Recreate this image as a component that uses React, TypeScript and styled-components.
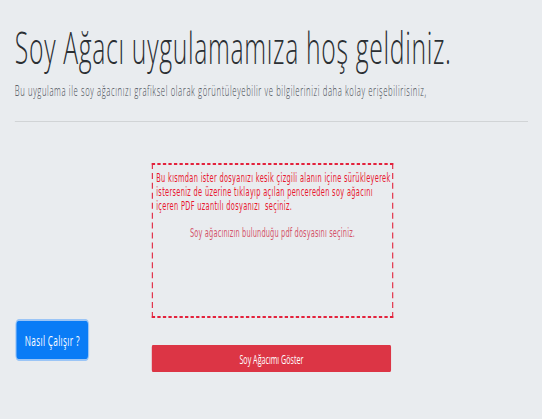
import styled, { createGlobalStyle } from "styled-components";

// the reference is a wide page photographed into a narrow frame, so the
// whole stage is laid out at full width and squeezed horizontally
const SQUEEZE = 0.55;

const GlobalStyle = createGlobalStyle`
  html, body {
    margin: 0;
    padding: 0;
    background-color: #e9ecef;
    overflow: hidden;
  }

  body {
    min-height: 100vh;
    font-family: "Open Sans", "Liberation Sans", sans-serif;
  }
`

const Stage = styled.div`
  width: ${Math.round(542 / SQUEEZE)}px;
  min-height: 419px;
  transform: scaleX(${SQUEEZE});
  transform-origin: 0 0;
`

const Header = styled.header`
  padding: 20px 25px 0 27px;
`

const Title = styled.h1`
  margin: 0;
  font-size: 45px;
  font-weight: 300;
  line-height: 1.2;
  letter-spacing: 1.2px;
  color: #2b2f33;
  white-space: nowrap;
`

const Lead = styled.p`
  margin: 6px 0 0;
  font-size: 14px;
  font-weight: 300;
  line-height: 1.5;
  letter-spacing: 1.1px;
  color: #44494f;
  white-space: nowrap;
`

const Divider = styled.hr`
  margin: 20px 0 0;
  border: 0;
  border-top: 1px solid rgba(0, 0, 0, 0.1);
`

const Main = styled.main`
  display: grid;
  grid-template-columns: 249px 439px 1fr;
  padding-left: 27px;
  margin-top: 41px;
`

const Side = styled.div`
  padding-top: 158px;
  padding-left: 3px;
`

const Center = styled.div`
  display: flex;
  flex-direction: column;
`

const DropZone = styled.div`
  box-sizing: border-box;
  height: 155px;
  padding: 6px 6px 5px;
  border: 2px dashed #e3223c;
  font-family: "DejaVu Sans", "Liberation Sans", sans-serif;
  font-size: 12px;
  line-height: 14px;
  letter-spacing: 0.3px;
  cursor: pointer;
`

const Instructions = styled.p`
  margin: 0;
  color: #e8182f;
  letter-spacing: 0.6px;
  white-space: nowrap;
`

const Hint = styled.p`
  margin: 13px 0 0;
  text-align: center;
  color: #d4556b;
`

const Button = styled.button<{ $tone: "primary" | "danger" }>`
  border: 0;
  border-radius: 4px;
  color: #fff;
  font-family: "Open Sans", "Liberation Sans", sans-serif;
  cursor: pointer;
  background-color: ${(p) => (p.$tone === "primary" ? "#0a7cf6" : "#dc3545")};
`

const HelpButton = styled(Button)`
  height: 38px;
  padding: 0 15px;
  font-size: 15px;
  letter-spacing: 0.6px;
  box-shadow: 0 0 0 2px rgba(60, 150, 255, 0.45);
`

const ShowButton = styled(Button)`
  margin-top: 27px;
  height: 27px;
  width: 435px;
  font-size: 13px;
  border-radius: 2px;
`

export default function App() {
  return (
    <>
      <GlobalStyle />
      <Stage>
        <Header>
          <Title>Soy Ağacı uygulamamıza hoş geldiniz.</Title>
          <Lead>
            Bu uygulama ile soy ağacınızı grafiksel olarak görüntüleyebilir ve bilgilerinizi daha kolay erişebilirisiniz,
          </Lead>
          <Divider />
        </Header>
        <Main>
          <Side>
            <HelpButton $tone="primary">Nasıl Çalışır ?</HelpButton>
          </Side>
          <Center>
            <DropZone>
              <Instructions>
                Bu kısmdan ister dosyanızı kesik çizgili alanın içine sürükleyerek
                <br />
                isterseniz de üzerine tıklayıp açılan pencereden soy ağacını
                <br />
                içeren PDF uzantılı dosyanızı&nbsp; seçiniz.
              </Instructions>
              <Hint>Soy ağacınızın bulunduğu pdf dosyasını seçiniz.</Hint>
            </DropZone>
            <ShowButton $tone="danger">Soy Ağacımı Göster</ShowButton>
          </Center>
          <div />
        </Main>
      </Stage>
    </>
  );
}
